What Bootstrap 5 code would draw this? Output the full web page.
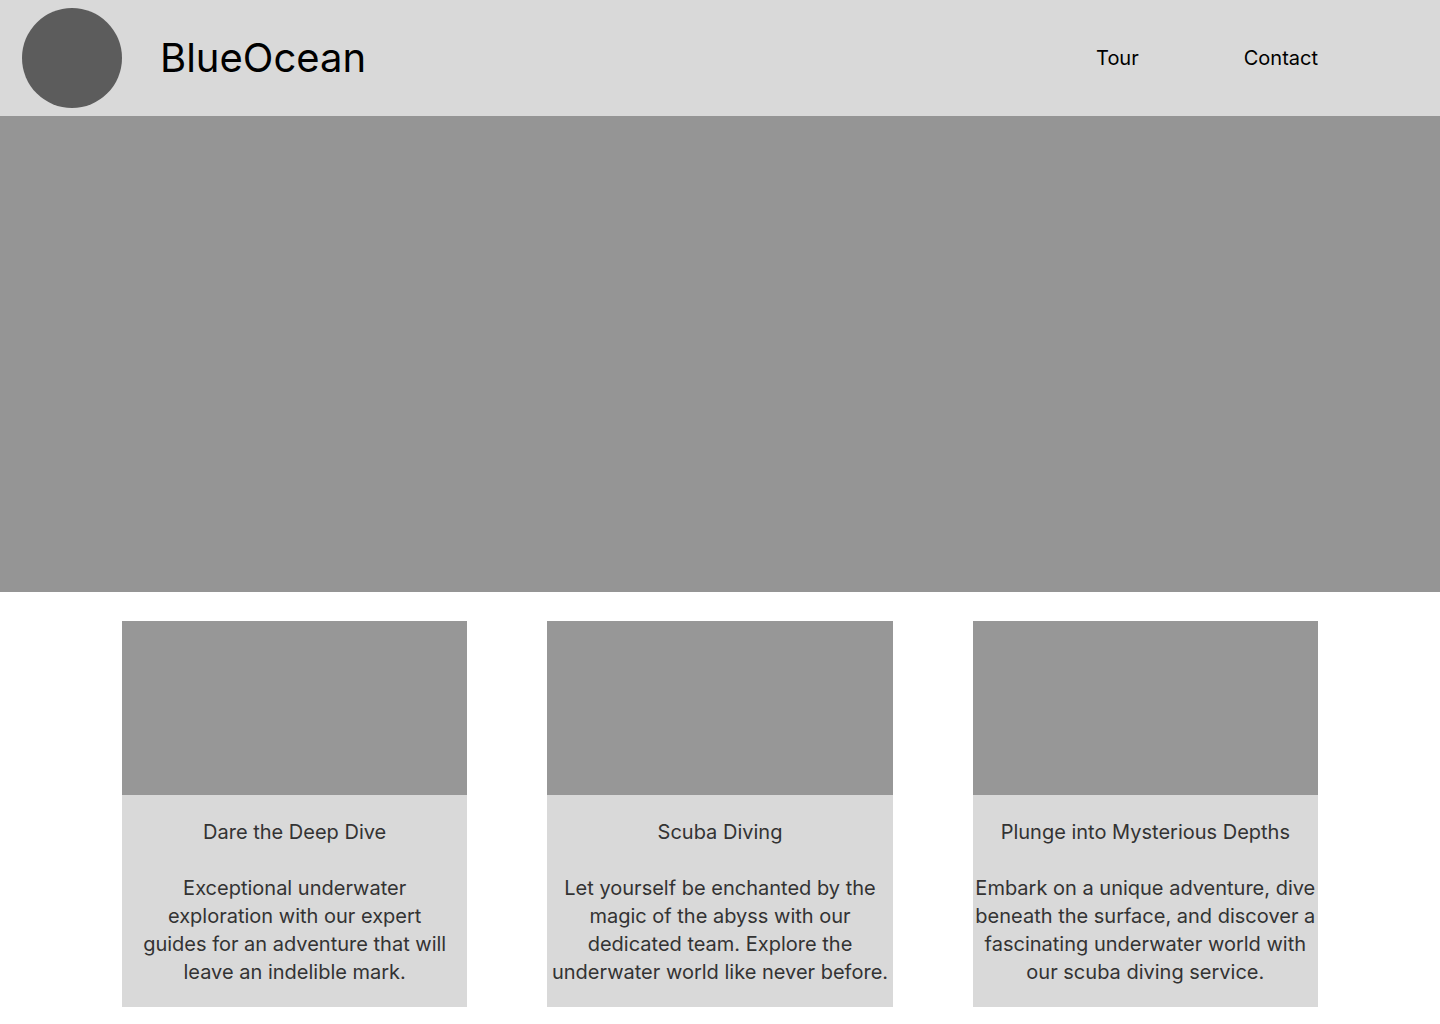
<!DOCTYPE html>
<html lang="en">
<head>
<meta charset="utf-8">
<meta name="viewport" content="width=device-width, initial-scale=1">
<title>BlueOcean</title>
<link href="https://cdn.jsdelivr.net/npm/bootstrap@5.3.0/dist/css/bootstrap.min.css" rel="stylesheet">
<style>
  body { font-family: Inter, sans-serif; font-size: 20px; line-height: 28px; color: #333; background: #fff; }
  .site-bar { background: #d9d9d9; min-height: 116px; padding: 8px 122px 8px 22px; }
  .site-logo { width: 100px; height: 100px; background: #5c5c5c; }
  .site-name { font-size: 40px; line-height: 48px; color: #000; margin-left: 38px; }
  .site-links { gap: 105px; }
  .site-links a { color: #000; }
  .hero { height: 476px; background: #959595; }
  .tours { padding: 29px 122px 17px; gap: 80px; }
  .tour { flex: 1 1 280px; background: #d9d9d9; }
  .tour-photo { height: 174px; background: #979797; }
  .tour-text { padding: 23px 0 21px; }
  .tour-text h2 { font-size: 20px; line-height: 28px; font-weight: 400; margin-bottom: 28px; }
</style>
</head>
<body>
<header class="site-bar d-flex flex-wrap align-items-center justify-content-between">
  <a class="d-flex align-items-center text-decoration-none" href="#">
    <span class="site-logo rounded-circle"></span>
    <span class="site-name">BlueOcean</span>
  </a>
  <nav class="site-links d-flex" aria-label="Main">
    <a class="text-decoration-none" href="#tours">Tour</a>
    <a class="text-decoration-none" href="#contact">Contact</a>
  </nav>
</header>
<main>
  <section class="hero" aria-label="Banner"></section>
  <section class="tours d-flex flex-wrap" id="tours">
    <article class="tour">
      <div class="tour-photo"></div>
      <div class="tour-text text-center px-3">
        <h2>Dare the Deep Dive</h2>
        <p class="mb-0">Exceptional underwater exploration with our expert guides for an adventure that will leave an indelible mark.</p>
      </div>
    </article>
    <article class="tour">
      <div class="tour-photo"></div>
      <div class="tour-text text-center">
        <h2>Scuba Diving</h2>
        <p class="mb-0">Let yourself be enchanted by the magic of the abyss with our dedicated team. Explore the underwater world like never before.</p>
      </div>
    </article>
    <article class="tour">
      <div class="tour-photo"></div>
      <div class="tour-text text-center">
        <h2>Plunge into Mysterious Depths</h2>
        <p class="mb-0">Embark on a unique adventure, dive beneath the surface, and discover a fascinating underwater world with our scuba diving service.</p>
      </div>
    </article>
  </section>
</main>
<script src="https://cdn.jsdelivr.net/npm/bootstrap@5.3.0/dist/js/bootstrap.bundle.min.js"></script>
</body>
</html>
